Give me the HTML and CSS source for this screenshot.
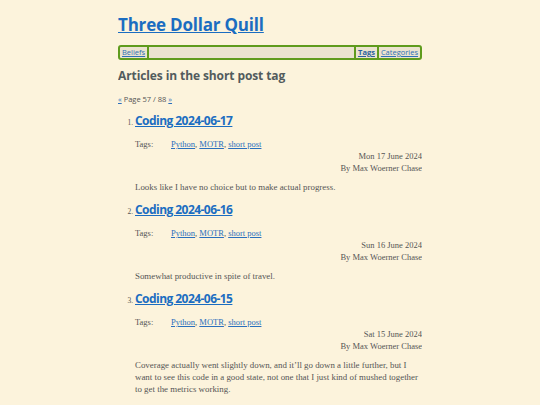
FILE: index.html
```html
<!DOCTYPE html>
<html>
<head>
<meta charset="utf-8">
<link rel="stylesheet" href="styles.css">
</head>
<body>
<div class="page">
  <h1 class="site-title"><a href="#">Three Dollar Quill</a></h1>
  <nav class="nav">
    <a class="nav-link" href="#">Beliefs</a>
    <span class="nav-fill"></span>
    <a class="nav-link nav-current" href="#">Tags</a>
    <a class="nav-link" href="#">Categories</a>
  </nav>
  <h2 class="section-title">Articles in the short post tag</h2>
  <p class="pager"><a href="#">«</a> Page 57 / 88 <a href="#">»</a></p>
  <ol class="articles">
    <li class="article">
      <h3 class="article-title"><a href="#">Coding 2024-06-17</a></h3>
      <div class="tags"><span class="tags-label">Tags:</span><span><a href="#">Python</a>, <a href="#">MOTR</a>, <a href="#">short post</a></span></div>
      <div class="meta">Mon 17 June 2024</div>
      <div class="meta">By Max Woerner Chase</div>
      <p class="summary">Looks like I have no choice but to make actual progress.</p>
    </li>
    <li class="article">
      <h3 class="article-title"><a href="#">Coding 2024-06-16</a></h3>
      <div class="tags"><span class="tags-label">Tags:</span><span><a href="#">Python</a>, <a href="#">MOTR</a>, <a href="#">short post</a></span></div>
      <div class="meta">Sun 16 June 2024</div>
      <div class="meta">By Max Woerner Chase</div>
      <p class="summary">Somewhat productive in spite of travel.</p>
    </li>
    <li class="article">
      <h3 class="article-title"><a href="#">Coding 2024-06-15</a></h3>
      <div class="tags"><span class="tags-label">Tags:</span><span><a href="#">Python</a>, <a href="#">MOTR</a>, <a href="#">short post</a></span></div>
      <div class="meta">Sat 15 June 2024</div>
      <div class="meta">By Max Woerner Chase</div>
      <p class="summary">Coverage actually went slightly down, and it’ll go down a little further, but I want to see this code in a good state, not one that I just kind of mushed together to get the metrics working.</p>
    </li>
  </ol>
</div>
</body>
</html>
```
FILE: styles.css
```css
html, body {
  margin: 0;
  padding: 0;
  background: #fcf3dc;
}
body {
  font-family: "Liberation Serif", serif;
  font-size: 8.5px;
  color: #555;
}
a {
  color: #2a6fbd;
}
.page {
  width: 304px;
  margin: 0 auto;
  overflow: hidden;
}
.site-title {
  font-family: "Open Sans", sans-serif;
  font-weight: 700;
  font-size: 17px;
  line-height: 22px;
  margin: 14px 0 0 0;
  letter-spacing: -0.2px;
}
.site-title a {
  color: #1b6dc1;
}
.nav {
  margin-top: 9px;
  height: 11px;
  border: 2px solid #5f9b1d;
  border-radius: 3px;
  background: #ebe3cf;
  display: flex;
  align-items: stretch;
  font-family: "Open Sans", sans-serif;
  font-size: 7.5px;
  line-height: 11px;
}
.nav-link {
  padding: 0 2px;
  border-right: 2px solid #5f9b1d;
  color: #2f70b5;
}
.nav-link:last-child {
  border-right: 0;
}
.nav-fill {
  flex: 1;
  border-right: 2px solid #5f9b1d;
}
.nav-current {
  font-weight: 700;
  color: #2a5f9e;
}
.section-title {
  font-family: "Open Sans", sans-serif;
  font-weight: 700;
  font-size: 12px;
  line-height: 16px;
  margin: 8px 0 0 0;
  color: #525b5d;
  letter-spacing: -0.1px;
}
.pager {
  margin: 9px 0 0 0;
  line-height: 12px;
  font-family: "Open Sans", sans-serif;
  font-size: 7.5px;
  color: #555;
}
.articles {
  margin: 8px 0 0 0;
  padding-left: 17px;
}
.article {
  margin-bottom: 9px;
}
.article::marker {
  font-size: 7.5px;
  color: #555;
}
.article-title {
  margin: 0;
  font-family: "Open Sans", sans-serif;
  font-weight: 700;
  font-size: 12px;
  line-height: 16px;
  letter-spacing: -0.55px;
}
.article-title a {
  color: #1b6dc1;
}
.tags {
  margin-top: 9px;
  display: grid;
  grid-template-columns: 36px auto;
  line-height: 12px;
}
.meta {
  text-align: right;
  line-height: 12px;
}
.summary {
  margin: 7px 0 0 0;
  line-height: 12px;
  font-size: 8.9px;
}
```
